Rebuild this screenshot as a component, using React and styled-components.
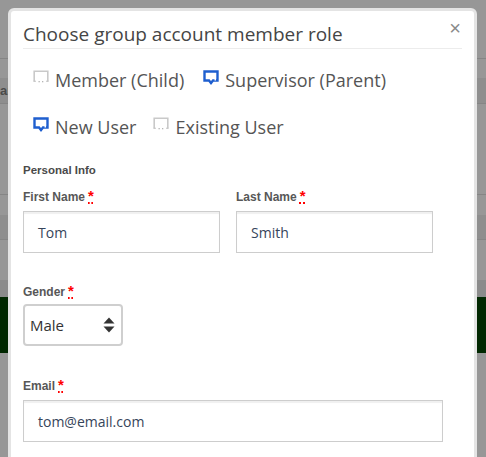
import React from "react";
import styled, { createGlobalStyle } from "styled-components";

const Global = createGlobalStyle`
  html, body { margin: 0; padding: 0; }
  body { width: 486px; height: 457px; overflow: hidden; background: #979797; font-family: "Open Sans", "Liberation Sans", sans-serif; }
  #root { position: relative; width: 486px; height: 457px; overflow: hidden; }
`;

const Backdrop = styled.div`
  display: flex;
  flex-direction: column;
  width: 486px;
  height: 457px;
  background: #979797;
`;

const BgRow = styled.div`
  height: ${(p) => p.h}px;
  flex: none;
  background: ${(p) => p.bg || "#979797"};
  border-bottom: ${(p) => (p.line ? "1px solid #858585" : "none")};
  font: bold 13px "Liberation Sans", sans-serif;
  color: #4a4a4a;
  display: flex;
  align-items: center;
`;

const Modal = styled.div`
  position: absolute;
  left: 8px;
  top: 8px;
  width: 463px;
  height: 470px;
  box-sizing: content-box;
  background: #fff;
  border: 3px solid #e4e4e4;
  border-radius: 6px;
  overflow: hidden;
`;

const Header = styled.div`
  position: relative;
  margin: 0 12px;
  padding: 11px 0 2px 0;
  border-bottom: 1px solid #ececec;
`;

const Title = styled.h4`
  margin: 0;
  font: 400 19px/24px "Open Sans", sans-serif;
  color: #454545;
`;

const Close = styled.span`
  position: absolute;
  right: 1px;
  top: 7px;
  font: 400 20px/20px "Liberation Sans", sans-serif;
  color: #8a8a8a;
`;

const Body = styled.div`
  padding: 0 12px;
`;

const OptionRow = styled.div`
  display: flex;
  align-items: center;
  height: 24px;
  margin-top: ${(p) => p.mt}px;
  padding-left: 10px;
  gap: ${(p) => p.gap}px;
`;

const Option = styled.label`
  display: flex;
  align-items: center;
  gap: 6px;
  font: 400 18px/24px "Open Sans", sans-serif;
  color: #555;
`;

const IconBox = styled.svg`
  width: 16px;
  height: 16px;
  flex: none;
  margin-top: -4px;
`;

const Section = styled.div`
  margin-top: 24px;
  font: bold 11.5px/14px "Liberation Sans", sans-serif;
  color: #4a4a4a;
`;

const FieldRow = styled.div`
  display: flex;
  gap: 16px;
  margin-top: ${(p) => p.mt}px;
`;

const Field = styled.div`
  display: flex;
  flex-direction: column;
  width: ${(p) => p.w}px;
`;

const Label = styled.label`
  font: bold 12px/14px "Liberation Sans", sans-serif;
  color: #575757;
  margin-bottom: ${(p) => p.mb ?? 7}px;
  abbr {
    color: #f00;
    font-size: 15px;
    margin-left: 3px;
    text-decoration: underline dotted #f00;
    text-decoration-thickness: 2px;
    text-underline-offset: 1px;
  }
`;

const Input = styled.div`
  box-sizing: border-box;
  height: 42px;
  border: 1px solid #cdcdcd;
  box-shadow: inset 0 2px 1px #f0f0f0;
  padding: 0 14px;
  display: flex;
  align-items: center;
  font: 400 14px "Open Sans", sans-serif;
  color: #36455a;
`;

const Select = styled.div`
  box-sizing: border-box;
  width: 100px;
  height: 42px;
  border: 2px solid #cfcfcf;
  border-radius: 4px;
  padding: 0 6px 0 5px;
  display: flex;
  align-items: center;
  justify-content: space-between;
  font: 400 15px "Open Sans", sans-serif;
  color: #333;
`;

const Required = () => <abbr title="required">*</abbr>;

const CheckIcon = ({ on }) =>
  on ? (
    <IconBox viewBox="0 0 16 16">
      <path d="M1.5 1.5 H14.5 V10.5 H10 L8 13 L6 10.5 H1.5 Z" fill="none" stroke="#1f5fcf" strokeWidth="2.4" strokeLinejoin="miter" />
      <path d="M6 11 L8 13.6 L10 11 Z" fill="#1f5fcf" />
      <rect x="11.5" y="9" width="1.5" height="1.5" fill="#fff" />
    </IconBox>
  ) : (
    <IconBox viewBox="0 0 16 16">
      <path d="M1.2 11 V1.2 H14.8 V11" fill="none" stroke="#c9c9c9" strokeWidth="1.6" />
      <rect x="0.4" y="10.6" width="2.4" height="1.4" fill="#c9c9c9" />
      <rect x="13.2" y="10.6" width="2.4" height="1.4" fill="#c9c9c9" />
      <rect x="5.5" y="11" width="1.3" height="1.3" fill="#b5b5b5" />
      <rect x="9" y="11" width="1.3" height="1.3" fill="#b5b5b5" />
    </IconBox>
  );

const Arrows = () => (
  <svg width="12" height="18" viewBox="0 0 12 18">
    <path d="M0.5 7.5 L6 1.5 L11.5 7.5 Z" fill="#333" />
    <path d="M0.5 10.5 L6 16.5 L11.5 10.5 Z" fill="#333" />
  </svg>
);

export default function App() {
  return (
    <>
      <Global />
      <Backdrop>
        <BgRow h={58} line />
        <BgRow h={19} />
        <BgRow h={25} bg="#8e8e8e" line>an</BgRow>
        <BgRow h={90} line />
        <BgRow h={20} />
        <BgRow h={24} bg="#8e8e8e" line />
        <BgRow h={40} />
        <BgRow h={17} bg="#8b8b8b" />
        <BgRow h={56} bg="#012801" />
        <BgRow h={106} />
      </Backdrop>
      <Modal>
        <Header>
          <Title>Choose group account member role</Title>
          <Close>×</Close>
        </Header>
        <Body>
          <OptionRow mt={19} gap={19}>
            <Option><CheckIcon />Member (Child)</Option>
            <Option><CheckIcon on />Supervisor (Parent)</Option>
          </OptionRow>
          <OptionRow mt={23} gap={17}>
            <Option><CheckIcon on />New User</Option>
            <Option><CheckIcon />Existing User</Option>
          </OptionRow>
          <Section>Personal Info</Section>
          <FieldRow mt={12}>
            <Field w={197}>
              <Label>First Name<Required /></Label>
              <Input>Tom</Input>
            </Field>
            <Field w={197}>
              <Label>Last Name<Required /></Label>
              <Input>Smith</Input>
            </Field>
          </FieldRow>
          <FieldRow mt={31}>
            <Field w={100}>
              <Label mb={5}>Gender<Required /></Label>
              <Select>Male<Arrows /></Select>
            </Field>
          </FieldRow>
          <FieldRow mt={32}>
            <Field w={420}>
              <Label>Email<Required /></Label>
              <Input>tom@email.com</Input>
            </Field>
          </FieldRow>
        </Body>
      </Modal>
    </>
  );
}
